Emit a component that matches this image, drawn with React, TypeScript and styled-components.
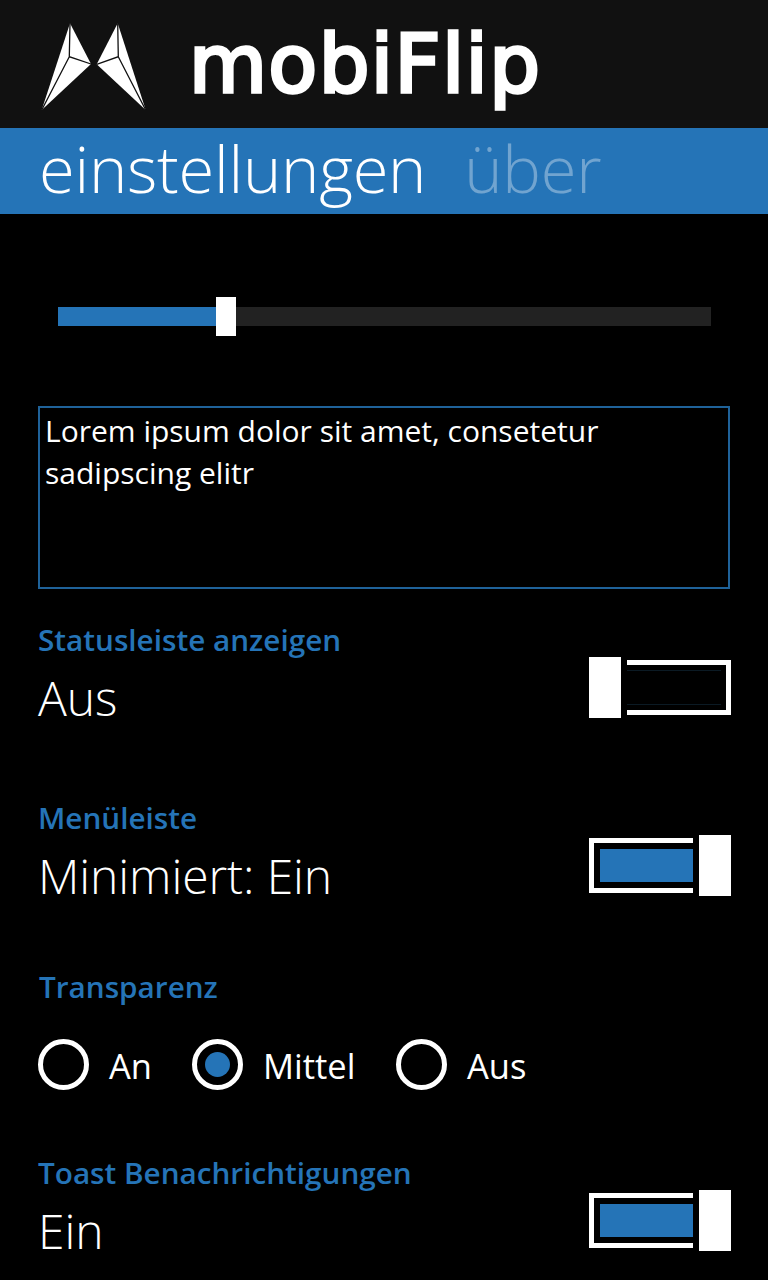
import React from "react";
import styled, { createGlobalStyle } from "styled-components";

const BLUE = "#2574b7";
const FONT = `"Open Sans", "Noto Sans", sans-serif`;

const Global = createGlobalStyle`
  html, body { margin: 0; padding: 0; background: #000; }
  body { font-family: ${FONT}; color: #fff; }
`;
const Page = styled.div`
  width: 768px; height: 1280px; overflow: hidden; background: #000;
  display: flex; flex-direction: column;
`;
const Header = styled.header`
  height: 128px; background: #111; display: flex; align-items: flex-start;
  padding-left: 41px; box-sizing: border-box;
`;
const LogoMark = styled.svg`
  width: 106px; height: 87px; margin-top: 23px; flex: none;
`;
const LogoText = styled.div`
  margin-left: 42px; margin-top: 15px;
  font-family: "DejaVu Sans", sans-serif; font-weight: 400; font-size: 80px; line-height: 100px;
  letter-spacing: 1.4px; color: #fff; -webkit-text-stroke: 3.5px #fff;
`;
const Tabs = styled.nav`
  height: 86px; background: ${BLUE}; display: flex; gap: 38px; padding-left: 39px;
  align-items: flex-start;
`;
const Tab = styled.div<{ $active?: boolean }>`
  font-size: 65px; font-weight: 300; line-height: 80px; letter-spacing: -0.25px;
  color: ${(p) => (p.$active ? "#fff" : "rgba(255,255,255,0.35)")};
`;
const SliderWrap = styled.div`
  margin: 83px 57px 0 58px; height: 39px; display: flex; align-items: center;
`;
const SliderFill = styled.div`
  width: 158px; height: 19px; background: ${BLUE};
`;
const SliderThumb = styled.div`
  width: 20px; height: 39px; background: #fff; flex: none;
`;
const SliderRest = styled.div`
  flex: 1; height: 19px; background: #222;
`;
const TextBox = styled.div`
  margin: 70px 38px 0; height: 183px; box-sizing: border-box; border: 2px solid #1f6299;
  padding: 2px 5px; font-size: 30px; line-height: 42px; color: #fff;
  font-weight: 400;
`;
const Section = styled.section<{ $top: number; $height: number }>`
  margin-top: ${(p) => p.$top}px; height: ${(p) => p.$height}px; margin-left: 38px; margin-right: 37px;
  display: flex; justify-content: space-between; align-items: flex-start;
`;
const Label = styled.div`
  color: ${BLUE}; font-size: 29.7px; font-weight: 600; line-height: 36px;
`;
const Value = styled.div`
  font-size: 48px; font-weight: 300; line-height: 60px; letter-spacing: -0.1px; margin-top: 10px;
`;
const ToggleBox = styled.div<{ $top: number }>`
  display: flex; align-items: center; gap: 6px; margin-top: ${(p) => p.$top}px; width: 142px; height: 61px;
`;
const Thumb = styled.div`
  width: 32px; height: 61px; background: #fff; flex: none;
`;
const Frame = styled.div<{ $on: boolean }>`
  width: 104px; height: 55px; box-sizing: border-box; border: 5px solid #fff; flex: none;
  border-left-width: ${(p) => (p.$on ? 5 : 0)}px;
  border-right-width: ${(p) => (p.$on ? 0 : 5)}px;
  padding: ${(p) => (p.$on ? "6px 0 6px 6px" : "5px 5px 5px 0")};
`;
const Fill = styled.div<{ $on: boolean }>`
  height: 100%; box-sizing: border-box;
  background: ${(p) => (p.$on ? BLUE : "transparent")};
  border-top: ${(p) => (p.$on ? "0" : "1px solid #0b1a24")};
  border-bottom: ${(p) => (p.$on ? "0" : "1px solid #0b1a24")};
`;
const RadioTitle = styled(Label)`
  margin: 49px 0 0 39px;
`;
const RadioRow = styled.div`
  display: flex; align-items: center; margin: 35px 0 0 38px; height: 52px;
`;
const RadioOption = styled.div<{ $width: number }>`
  display: flex; align-items: center; gap: 20px; width: ${(p) => p.$width}px;
`;
const Circle = styled.div<{ $checked?: boolean }>`
  width: 51px; height: 51px; box-sizing: border-box; border: 5px solid #fff; border-radius: 50%;
  display: flex; align-items: center; justify-content: center; flex: none; margin-bottom: 3px;
  &::after {
    content: ""; width: 25px; height: 25px; border-radius: 50%;
    background: ${(p) => (p.$checked ? BLUE : "transparent")};
  }
`;
const RadioText = styled.span`
  font-size: 34.5px; font-weight: 400; line-height: 44px;
`;

function Toggle({ on, top }: { on: boolean; top: number }) {
  const frame = (
    <Frame $on={on}>
      <Fill $on={on} />
    </Frame>
  );
  return (
    <ToggleBox $top={top}>
      {on ? frame : <Thumb />}
      {on ? <Thumb /> : frame}
    </ToggleBox>
  );
}

export default function App() {
  return (
    <Page>
      <Global />
      <Header>
        <LogoMark viewBox="0 0 106 87">
          <path fill="#fff" d="M29 0.300 L50 41 L0.700 87 Z" />
          <path fill="#fff" d="M76.700 0.300 L55.700 41.300 L104.700 87 Z" />
          <path fill="none" stroke="#111" strokeWidth="1.300" d="M29 0.300 L28.300 33.700 L50 41 M28.300 33.700 L0.700 87" />
          <path fill="none" stroke="#111" strokeWidth="1.300" d="M76.700 0.300 L77.300 33.700 L55.700 41.300 M77.300 33.700 L104.700 87" />
        </LogoMark>
        <LogoText>mobiFlip</LogoText>
      </Header>
      <Tabs>
        <Tab $active>einstellungen</Tab>
        <Tab>über</Tab>
      </Tabs>
      <SliderWrap>
        <SliderFill />
        <SliderThumb />
        <SliderRest />
      </SliderWrap>
      <TextBox>
        Lorem ipsum dolor sit amet, consetetur
        <br />
        sadipscing elitr
      </TextBox>
      <Section $top={33} $height={120}>
        <div>
          <Label>Statusleiste anzeigen</Label>
          <Value>Aus</Value>
        </div>
        <Toggle on={false} top={35} />
      </Section>
      <Section $top={58} $height={120}>
        <div>
          <Label>Menüleiste</Label>
          <Value>Minimiert: Ein</Value>
        </div>
        <Toggle on top={35} />
      </Section>
      <RadioTitle>Transparenz</RadioTitle>
      <RadioRow>
        <RadioOption $width={154}>
          <Circle />
          <RadioText>An</RadioText>
        </RadioOption>
        <RadioOption $width={204}>
          <Circle $checked />
          <RadioText>Mittel</RadioText>
        </RadioOption>
        <RadioOption $width={140}>
          <Circle />
          <RadioText>Aus</RadioText>
        </RadioOption>
      </RadioRow>
      <Section $top={63} $height={120}>
        <div>
          <Label>Toast Benachrichtigungen</Label>
          <Value>Ein</Value>
        </div>
        <Toggle on top={35} />
      </Section>
    </Page>
  );
}
